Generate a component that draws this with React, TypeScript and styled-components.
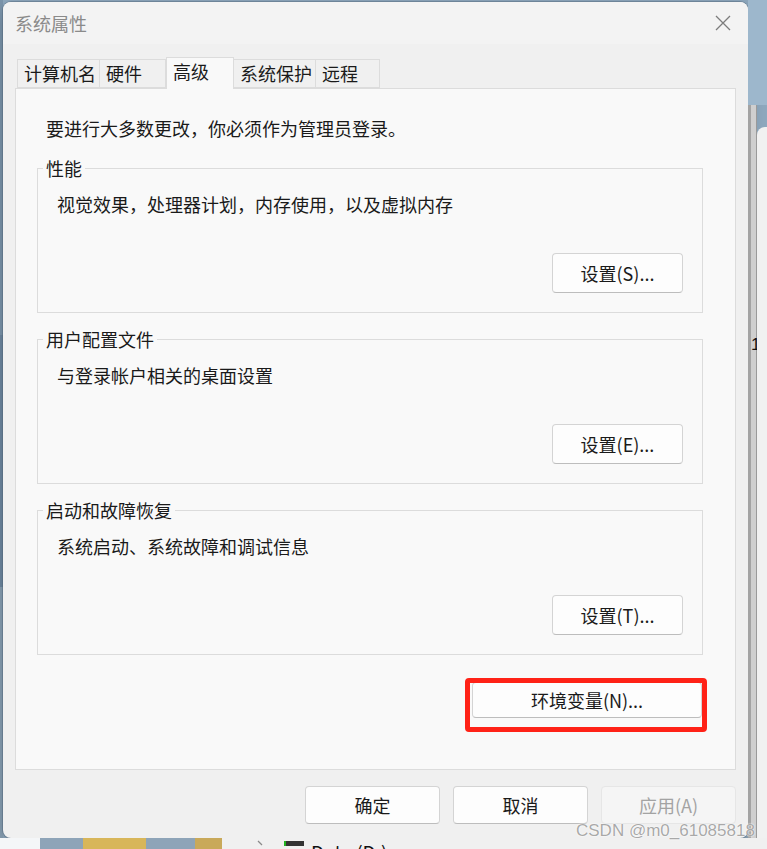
import React from "react";
import styled, { createGlobalStyle } from "styled-components";

const GlobalStyle = createGlobalStyle`
  html, body {
    margin: 0;
    padding: 0;
    background: #8fa9bf;
  }
  * {
    box-sizing: border-box;
  }
`;

const FONT = `"Noto Sans CJK SC", "Noto Sans", sans-serif`;

const Desktop = styled.div`
  position: relative;
  width: 767px;
  height: 849px;
  overflow: hidden;
  display: grid;
  grid-template-columns: 3px 745px 1fr;
  grid-template-rows: 2px 836px 1fr;
  background: #8fa9bf;
  font-family: ${FONT};
`;

const LeftEdge = styled.div`
  grid-column: 1;
  grid-row: 1 / 3;
  background: linear-gradient(to bottom, #7d97ae 0 40%, #6f8aa3 40% 70%, #8aa2b6 70%);
`;

const RightPane = styled.div`
  grid-column: 3;
  grid-row: 1 / 3;
  display: flex;
  background: linear-gradient(to bottom, #9db7cc 0 105px, transparent 105px);
`;

const RightStrip = styled.div`
  width: 9px;
  margin-top: 105px;
  border-left: 3px solid #a3a3a3;
  border-right: 1px solid #9a9a9a;
  background: #cfcfcf;
  font-family: "Liberation Sans", Arial, sans-serif;
  font-size: 17px;
  color: #111;
  padding-top: 230px;
  overflow: visible;
  white-space: nowrap;
`;

const RightWindow = styled.div`
  flex: 1;
  margin-top: 127px;
  background: #f1f1f1;
  border-top-left-radius: 8px;
`;

const BottomStrip = styled.div`
  grid-column: 1 / -1;
  grid-row: 3;
  display: flex;
  align-items: flex-start;
  background: #f0f0f0;
  overflow: hidden;
`;

const Swatch = styled.div<{ $w: number; $c: string }>`
  width: ${(p) => p.$w}px;
  height: 11px;
  background: ${(p) => p.$c};
`;

const Drive = styled.div`
  width: 20px;
  height: 5px;
  margin: 3px 0 0 20px;
  background: #333;
  border-left: 2px solid #1fb31f;
`;

const DriveName = styled.span`
  margin-left: 7px;
  margin-top: 2px;
  font-size: 19px;
  line-height: 24px;
  color: #111;
  white-space: nowrap;
`;

const Dialog = styled.div`
  grid-column: 2;
  grid-row: 2;
  display: flex;
  flex-direction: column;
  background: #f0f0f0;
  border-radius: 8px;
  box-shadow: 0 0 0 1px rgba(80, 100, 120, 0.45), 0 6px 20px rgba(0, 0, 0, 0.25);
  overflow: hidden;
  color: #1a1a1a;
`;

const TitleBar = styled.div`
  height: 42px;
  flex: none;
  display: flex;
  align-items: center;
  justify-content: space-between;
  padding: 0 17px 0 12px;
  background: #f3f3f3;
`;

const Title = styled.span`
  font-size: 18px;
  color: #8a8a8a;
`;

const Body = styled.div`
  padding: 13px 12px 0 12px;
`;

const TabRow = styled.div`
  display: flex;
  align-items: flex-end;
  padding-left: 2px;
  height: 32px;
  margin-bottom: -1px;
  position: relative;
  z-index: 1;
`;

const Tab = styled.div<{ $w: number; $active?: boolean }>`
  width: ${(p) => p.$w}px;
  height: ${(p) => (p.$active ? 32 : 29)}px;
  padding: ${(p) => (p.$active ? "0 0 0 6px" : "0 0 0 6px")};
  margin-bottom: ${(p) => (p.$active ? 0 : 1)}px;
  border: 1px solid #dcdcdc;
  border-bottom: ${(p) => (p.$active ? "none" : "1px solid #dcdcdc")};
  border-left: ${(p) => (p.$active ? "1px solid #dcdcdc" : "none")};
  background: ${(p) => (p.$active ? "#f9f9f9" : "#f0f0f0")};
  font-size: 18px;
  line-height: ${(p) => (p.$active ? "27px" : "26px")};
  white-space: nowrap;
  &:first-child {
    border-left: 1px solid #dcdcdc;
  }
`;

const Panel = styled.div`
  height: 682px;
  border: 1px solid #dcdcdc;
  background: #f9f9f9;
  padding: 0 32px 0 21px;
  display: flex;
  flex-direction: column;
`;

const Intro = styled.div`
  margin: 27px 0 0 9px;
  font-size: 18px;
  line-height: 24px;
`;

const Group = styled.fieldset<{ $first?: boolean }>`
  margin: ${(p) => (p.$first ? 16 : 14)}px 0 0 0;
  padding: 0 19px 19px 5px;
  border: 1px solid #dcdcdc;
  min-width: 0;
`;

const Legend = styled.legend`
  padding: 0 3px;
  font-size: 18px;
  line-height: 24px;
`;

const GroupContent = styled.div`
  padding-left: 14px;
  display: flex;
  flex-direction: column;
`;

const Desc = styled.div`
  margin-top: 12px;
  font-size: 18px;
  line-height: 24px;
`;

const Button = styled.button<{ $w: number; $h: number; $disabled?: boolean }>`
  width: ${(p) => p.$w}px;
  height: ${(p) => p.$h}px;
  padding: 0;
  border: 1px solid ${(p) => (p.$disabled ? "#e6e6e6" : "#d4d4d4")};
  border-bottom-color: ${(p) => (p.$disabled ? "#e6e6e6" : "#bdbdbd")};
  border-radius: 4px;
  background: ${(p) => (p.$disabled ? "#f5f5f5" : "#fdfdfd")};
  color: ${(p) => (p.$disabled ? "#a3a3a3" : "#1a1a1a")};
  font-family: ${FONT};
  font-size: 18px;
  line-height: 24px;
  text-align: center;
`;

const GroupButton = styled(Button)`
  margin-top: 37px;
  align-self: flex-end;
`;

const EnvRow = styled.div`
  margin-top: 27px;
  padding-right: 1px;
  display: flex;
  justify-content: flex-end;
`;

const Highlight = styled.div`
  position: relative;
`;

const RedBox = styled.div`
  position: absolute;
  left: -7px;
  top: -4px;
  right: -5px;
  bottom: -14px;
  border: 5px solid #ff2217;
  border-radius: 4px;
  pointer-events: none;
`;

const Footer = styled.div`
  display: flex;
  justify-content: flex-end;
  gap: 13px;
  margin-top: 16px;
`;

const Watermark = styled.div`
  position: absolute;
  left: 576px;
  top: 821px;
  font-family: "Liberation Sans", Arial, sans-serif;
  font-size: 17px;
  line-height: 20px;
  color: rgba(140, 140, 140, 0.75);
  text-shadow: 0 0 1px #fff, 0 0 2px #fff;
  white-space: nowrap;
`;

const CloseIcon = () => (
  <svg width="16" height="16" viewBox="0 0 16 16">
    <path d="M1 1 L15 15 M15 1 L1 15" stroke="#7c7c7c" strokeWidth="1.3" fill="none" />
  </svg>
);

const ChevronIcon = () => (
  <svg width="8" height="11" viewBox="0 0 8 11" style={{ marginLeft: 34 }}>
    <path d="M2 3 L6 7" stroke="#8a8a8a" strokeWidth="1.2" fill="none" />
  </svg>
);

const tabs = [
  { label: "计算机名", w: 83 },
  { label: "硬件", w: 66 },
  { label: "高级", w: 68, active: true },
  { label: "系统保护", w: 82 },
  { label: "远程", w: 64 },
];

const groups = [
  { title: "性能", desc: "视觉效果，处理器计划，内存使用，以及虚拟内存", btn: "设置(S)..." },
  { title: "用户配置文件", desc: "与登录帐户相关的桌面设置", btn: "设置(E)..." },
  { title: "启动和故障恢复", desc: "系统启动、系统故障和调试信息", btn: "设置(T)..." },
];

export default function App() {
  return (
    <>
      <GlobalStyle />
      <Desktop>
        <LeftEdge />
        <Dialog>
          <TitleBar>
            <Title>系统属性</Title>
            <CloseIcon />
          </TitleBar>
          <Body>
            <TabRow>
              {tabs.map((t) => (
                <Tab key={t.label} $w={t.w} $active={t.active}>
                  {t.label}
                </Tab>
              ))}
            </TabRow>
            <Panel>
              <Intro>要进行大多数更改，你必须作为管理员登录。</Intro>
              {groups.map((g, i) => (
                <Group key={g.title} $first={i === 0}>
                  <Legend>{g.title}</Legend>
                  <GroupContent>
                    <Desc>{g.desc}</Desc>
                    <GroupButton $w={131} $h={40}>
                      {g.btn}
                    </GroupButton>
                  </GroupContent>
                </Group>
              ))}
              <EnvRow>
                <Highlight>
                  <Button $w={230} $h={36}>
                    环境变量(N)...
                  </Button>
                  <RedBox />
                </Highlight>
              </EnvRow>
            </Panel>
            <Footer>
              <Button $w={135} $h={38}>确定</Button>
              <Button $w={135} $h={38}>取消</Button>
              <Button $w={135} $h={38} $disabled>
                应用(A)
              </Button>
            </Footer>
          </Body>
        </Dialog>
        <RightPane>
          <RightStrip>1</RightStrip>
          <RightWindow />
        </RightPane>
        <BottomStrip>
          <Swatch $w={40} $c="#f4f6f8" />
          <Swatch $w={43} $c="#8ea4b8" />
          <Swatch $w={63} $c="#d8b65a" />
          <Swatch $w={49} $c="#8ea4b8" />
          <Swatch $w={27} $c="#c9a95a" />
          <ChevronIcon />
          <Drive />
          <DriveName>Data (D:)</DriveName>
        </BottomStrip>
        <Watermark>CSDN @m0_61085818</Watermark>
      </Desktop>
    </>
  );
}
